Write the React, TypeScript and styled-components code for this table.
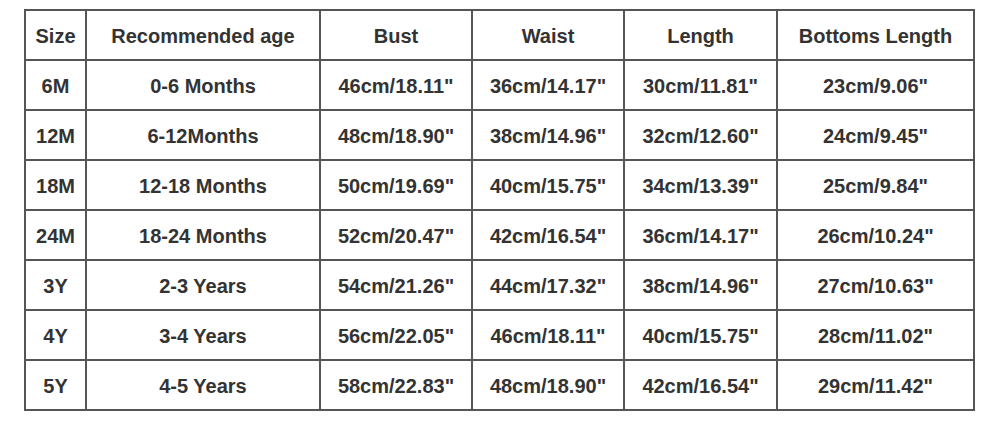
import React from "react";
import styled, { createGlobalStyle } from "styled-components";

const GlobalStyle = createGlobalStyle`
  html, body {
    margin: 0;
    padding: 0;
    background: #fff;
  }
`;

const Page = styled.div`
  width: 1000px;
  height: 421px;
  padding: 9px 0 0 24px;
  box-sizing: border-box;
  background: #fff;
`;

const Table = styled.table`
  border-collapse: collapse;
  table-layout: fixed;
  width: 951px;
  font-family: "Liberation Sans", Arial, sans-serif;
  font-weight: bold;
  font-size: 20px;
  color: #333;
`;

const Cell = styled.td`
  border: 2px solid #555;
  height: 50px;
  padding: 2px 0 0;
  text-align: center;
  vertical-align: middle;
  box-sizing: border-box;
`;

const widths = [61, 234, 152, 152, 153, 197];

const header = ["Size", "Recommended age", "Bust", "Waist", "Length", "Bottoms Length"];

const rows = [
  ["6M", "0-6 Months", '46cm/18.11"', '36cm/14.17"', '30cm/11.81"', '23cm/9.06"'],
  ["12M", "6-12Months", '48cm/18.90"', '38cm/14.96"', '32cm/12.60"', '24cm/9.45"'],
  ["18M", "12-18 Months", '50cm/19.69"', '40cm/15.75"', '34cm/13.39"', '25cm/9.84"'],
  ["24M", "18-24 Months", '52cm/20.47"', '42cm/16.54"', '36cm/14.17"', '26cm/10.24"'],
  ["3Y", "2-3 Years", '54cm/21.26"', '44cm/17.32"', '38cm/14.96"', '27cm/10.63"'],
  ["4Y", "3-4 Years", '56cm/22.05"', '46cm/18.11"', '40cm/15.75"', '28cm/11.02"'],
  ["5Y", "4-5 Years", '58cm/22.83"', '48cm/18.90"', '42cm/16.54"', '29cm/11.42"'],
];

export default function App() {
  return (
    <>
      <GlobalStyle />
      <Page>
        <Table>
          <colgroup>
            {widths.map((w, i) => (
              <col key={i} style={{ width: w }} />
            ))}
          </colgroup>
          <tbody>
            {[header, ...rows].map((r, i) => (
              <tr key={i}>
                {r.map((c, j) => (
                  <Cell key={j}>{c}</Cell>
                ))}
              </tr>
            ))}
          </tbody>
        </Table>
      </Page>
    </>
  );
}
